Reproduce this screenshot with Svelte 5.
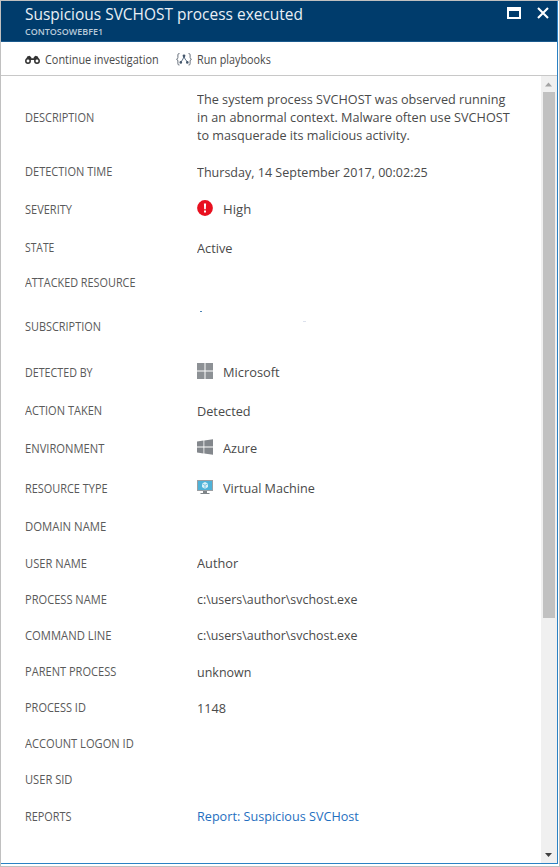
<script>
  // Condenses a text run horizontally so that it fills the given width.
  function fit(node, width) {
    const natural = node.offsetWidth;
    if (width && natural) node.style.transform = `scaleX(${(width - 0.7) / natural})`;
  }

  const rows = [
    { label: 'DESCRIPTION', w: 70, gap: 15, raised: true, lines: [
      ['The system process SVCHOST was observed running', 309],
      ['in an abnormal context. Malware often use SVCHOST', 313],
      ['to masquerade its malicious activity.', 214]
    ] },
    { label: 'DETECTION TIME', w: 88, gap: 18, lines: [['Thursday, 14 September 2017, 00:02:25', 231]] },
    { label: 'SEVERITY', w: 47.5, gap: 19, low: true, icon: 'alert', lines: [['High', 29]] },
    { label: 'STATE', w: 30, gap: 21, lines: [['Active', 36]] },
    { label: 'ATTACKED RESOURCE', w: 111, gap: 17, lines: [] },
    { label: 'SUBSCRIPTION', w: 77, gap: 26, lines: [] },
    { label: 'DETECTED BY', w: 68.5, gap: 27, low: true, icon: 'microsoft', lines: [['Microsoft', 57]] },
    { label: 'ACTION TAKEN', w: 78, gap: 21, lines: [['Detected', 54.5]] },
    { label: 'ENVIRONMENT', w: 80, gap: 19, low: true, icon: 'windows', lines: [['Azure', 35]] },
    { label: 'RESOURCE TYPE', w: 83.5, gap: 22, low: true, icon: 'vm', lines: [['Virtual Machine', 93]] },
    { label: 'DOMAIN NAME', w: 82, gap: 21, lines: [] },
    { label: 'USER NAME', w: 63, gap: 18, low: true, lines: [['Author', 42]] },
    { label: 'PROCESS NAME', w: 83, gap: 18, low: true, lines: [['c:\\users\\author\\svchost.exe', 161]] },
    { label: 'COMMAND LINE', w: 87, gap: 18, low: true, lines: [['c:\\users\\author\\svchost.exe', 161]] },
    { label: 'PARENT PROCESS', w: 92, gap: 19, lines: [['unknown', 55.5]] },
    { label: 'PROCESS ID', w: 62, gap: 18, lines: [['1148', 30]] },
    { label: 'ACCOUNT LOGON ID', w: 109, gap: 18, lines: [] },
    { label: 'USER SID', w: 48, gap: 18, lines: [] },
    { label: 'REPORTS', w: 47, gap: 18, low: true, link: true, lines: [['Report: Suspicious SVCHost', 163]] }
  ];
</script>

<div class="frame">
  <div class="blade">
    <header>
      <div class="titles">
        <h1><span class="t" use:fit={279}>Suspicious SVCHOST process executed</span></h1>
        <h2><span class="t" use:fit={79}>CONTOSOWEBFE1</span></h2>
      </div>
      <div class="controls">
        <svg width="14" height="12" viewBox="0 0 14 12"><path fill="#fff" fill-rule="evenodd" d="M0 0h14v12H0zM2 4v6h10V4z" /></svg>
        <svg width="12" height="12" viewBox="0 0 12 12"><path d="M1 1l10 10M11 1L1 11" stroke="#fff" stroke-width="2.1" /></svg>
      </div>
    </header>

    <nav>
      <svg width="15" height="10" viewBox="0 0 15 10">
        <path d="M2.200 1.600L4.500.8 6.300 2.300v.9h2.400v-.9L10.500.8l2.300.8 1.600 4-3.400 1-1.800-1.500H5.800L4 6.600.6 5.600z" fill="#333" />
        <circle cx="3" cy="6" r="2.200" fill="#fff" stroke="#333" stroke-width="1.500" />
        <circle cx="12" cy="6" r="2.200" fill="#fff" stroke="#333" stroke-width="1.500" />
      </svg>
      <span class="cmd first"><span class="t" use:fit={114}>Continue investigation</span></span>
      <svg width="16" height="13" viewBox="0 0 16 13" fill="none">
        <path d="M3.500.6H3Q1.900.6 1.900 1.800V4.500Q1.900 6 .5 6.300 1.900 6.600 1.900 8v2.800Q1.900 12 3 12h.5M12.500.6h.5q1.100 0 1.100 1.200v2.700q0 1.500 1.400 1.800-1.400.3-1.400 1.700v2.800q0 1.200-1.100 1.200h-.5" stroke="#68707c" />
        <path d="M8 3L9 6l2.500 3M8 3L7 6 4.800 9.300" stroke="#4a6078" stroke-width=".9" />
        <circle cx="8" cy="2.800" r="1.400" fill="#46586c" />
        <circle cx="4.800" cy="9.400" r="1.300" fill="#46586c" />
        <circle cx="11.300" cy="9.400" r="1.300" fill="#46586c" />
      </svg>
      <span class="cmd"><span class="t" use:fit={75}>Run playbooks</span></span>
    </nav>

    <div class="body">
      <main>
        {#each rows as row}
          <div class="row" style:margin-top="{row.gap}px">
            <div class="label" class:low={row.low}><span class="t" use:fit={row.w}>{row.label}</span></div>
            {#if row.icon}
              <svg class="icon" width="16" height="16" viewBox="0 0 16 16">
                {#if row.icon === 'alert'}
                  <circle cx="8" cy="8" r="7.900" fill="#e8101f" />
                  <path d="M6.900 3.500h2.200L8.800 9.300H7.200zM7 10.400h2v2H7z" fill="#fff" />
                {:else if row.icon === 'microsoft'}
                  <path d="M0 0h7.500v7.500H0zM8.500 0H16v7.500H8.500zM0 8.500h7.500V16H0zM8.500 8.500H16V16H8.500z" fill="#8d9195" />
                {:else if row.icon === 'windows'}
                  <path d="M0 2.500l6.500-1v6.100H0zM7.300 1.400L16 .2v7.400H7.300zM0 8.400h6.500v6.100L0 13.500zM7.300 8.400H16v7.400l-8.700-1.200z" fill="#83878c" />
                {:else}
                  <path d="M0 1h16v11H0z" fill="#9b9fa3" />
                  <path d="M1 2h14v9H1z" fill="#4fb2d8" />
                  <path d="M6 12h4v2h2.500v1h-9v-1H6z" fill="#7f8589" />
                  <path d="M8 3l3 1.600v3.500L8 9.900 5 8.100V4.600z" fill="#d9f0f8" />
                  <path d="M5 4.600l3 1.700 3-1.700M8 6.300v3.600" fill="none" stroke="#4fb2d8" stroke-width=".7" />
                {/if}
              </svg>
            {/if}
            <div class="value" class:link={row.link}>
              {#each row.lines as [text, width]}
                <div class="line" class:raised={row.raised}><span class="t" use:fit={width}>{text}</span></div>
              {/each}
            </div>
          </div>
        {/each}
        <i class="speck blue"></i>
        <i class="speck pale"></i>
      </main>
      <div class="scroll">
        <svg width="15" height="16" viewBox="0 0 15 16"><path d="M4 10.500l3.500-4 3.500 4z" fill="#a3a3a3" /></svg>
        <div class="thumb"></div>
        <svg class="down" width="15" height="16" viewBox="0 0 15 16"><path d="M4 6h7L7.500 10z" fill="#404040" /></svg>
      </div>
    </div>
  </div>
</div>

<style>
  :global(body) { background: #fff; }
  .frame {
    box-sizing: border-box;
    width: 560px;
    height: 867px;
    padding: 0 1px 2px 0;
    border: 1px solid #c0c0c0;
    font-family: "Open Sans", "Noto Sans", sans-serif;
    color: #4a4a4a;
    overflow: hidden;
  }
  .blade {
    box-sizing: border-box;
    display: flex;
    flex-direction: column;
    height: 863px;
    border-right: 1px solid #2b82c4;
    border-bottom: 1px solid #2b82c4;
  }
  .t { display: inline-block; white-space: nowrap; transform-origin: 0 50%; }
  header {
    box-sizing: border-box;
    display: flex;
    justify-content: space-between;
    height: 41px;
    padding: 0 8px 0 24px;
    background: #003c6c;
    border-bottom: 1px solid #1b5a8d;
    color: #e9eff5;
  }
  h1, h2 { margin: 0; font-weight: 400; }
  h1 { height: 22px; font-size: 17px; line-height: 26px; }
  h2 { font-size: 9.500px; line-height: 17px; font-weight: 600; color: #b9cad9; }
  .controls { display: flex; gap: 16px; padding-top: 6px; }
  nav {
    box-sizing: border-box;
    display: flex;
    align-items: center;
    height: 34px;
    padding: 2px 0 0 24px;
    border-bottom: 1px solid #c8c8c8;
    font-size: 12.500px;
  }
  .cmd { width: 80px; margin-left: 5px; line-height: 18px; }
  .cmd.first { width: 131px; }
  .body { display: flex; flex: 1; min-height: 0; }
  main { position: relative; flex: 1; }
  .row { display: flex; align-items: center; min-height: 18px; padding-left: 24px; }
  .label { width: 172px; height: 18px; flex: none; font-size: 12px; line-height: 18px; color: #5a5a5a; }
  .label.low { line-height: 20px; }
  .icon { flex: none; align-self: flex-start; margin: 0 10px 0 0; }
  .value { font-size: 13px; line-height: 18px; }
  .line { height: 18px; }
  .line.raised { line-height: 16px; }
  .link { color: #1f6fc0; }
  .speck { position: absolute; height: 1px; }
  .blue { left: 199px; top: 235px; width: 2px; background: #4c84b6; }
  .pale { left: 302px; top: 245px; width: 3px; background: #dce1ed; }
  .scroll { display: flex; flex-direction: column; width: 16px; background: #f0f0f0; }
  .thumb { width: 12px; height: 526px; margin-left: 2px; background: #c1c1c1; }
  .down { margin-top: auto; }
  svg { display: block; flex: none; }
</style>
